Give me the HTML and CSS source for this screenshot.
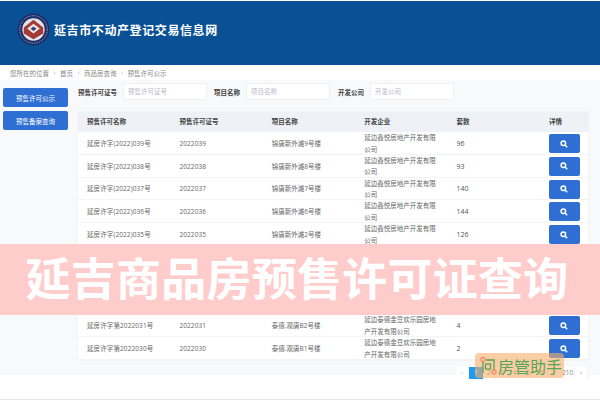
FILE: index.html
```html
<!DOCTYPE html>
<html lang="zh-CN">
<head>
    <meta charset="UTF-8">
    <title>延吉商品房预售许可证查询</title>
    <link rel="stylesheet" href="styles.css">
</head>
<body>
    <div class="header">
        <svg class="logo" viewBox="0 0 34 34">
            <circle cx="17" cy="17" r="16.5" fill="#1d2f6b"/>
            <circle cx="17" cy="17" r="14.2" fill="none" stroke="#dfe3ee" stroke-width="0.6" stroke-dasharray="1.5 1"/>
            <circle cx="17" cy="17" r="11.5" fill="#e4e2e4"/>
            <path d="M17 7 L27 15 L27 21 L17 27 L7 21 L7 15 Z" fill="#a33a38"/>
            <path d="M17 11 L23.5 16 L17 21 L10.5 16 Z" fill="#f1e6dc"/>
            <path d="M17 14 L20 16.2 L17 18.6 L14 16.2 Z" fill="#2c3f86"/>
        </svg>
        <h1>延吉市不动产登记交易信息网</h1>
    </div>

    <div class="crumb">
        <span>您所在的位置</span><i>›</i><span>首页</span><i>›</i><span>商品房查询</span><i>›</i><span>预售许可公示</span>
    </div>

    <div class="main">
        <div class="side">
            <a class="side-btn">预售许可公示</a>
            <a class="side-btn">预售备案查询</a>
        </div>
        <div class="content">
            <div class="filter">
                <label>预售许可证号</label>
                <input type="text" placeholder="预售许可证号">
                <label>项目名称</label>
                <input type="text" placeholder="项目名称">
                <label>开发公司</label>
                <input type="text" placeholder="开发公司">
            </div>
            <div class="table">
                <div class="row head">
                    <div>预售许可名称</div><div>预售许可证号</div><div>项目名称</div><div>开发企业</div><div>套数</div><div>详情</div>
                </div>
                <div class="row"><div class="lat">延房许字(2022)039号</div><div class="lat">2022039</div><div>锦唐新外滩9号楼</div><div>延边鑫悦房地产开发有限公司</div><div class="num">96</div><div><button class="detail"><svg viewBox="0 0 12 12"><circle cx="5" cy="5" r="3.4"/><path d="M7.5 7.5 L10.8 10.8"/></svg></button></div></div>
                <div class="row"><div class="lat">延房许字(2022)038号</div><div class="lat">2022038</div><div>锦唐新外滩8号楼</div><div>延边鑫悦房地产开发有限公司</div><div class="num">93</div><div><button class="detail"><svg viewBox="0 0 12 12"><circle cx="5" cy="5" r="3.4"/><path d="M7.5 7.5 L10.8 10.8"/></svg></button></div></div>
                <div class="row"><div class="lat">延房许字(2022)037号</div><div class="lat">2022037</div><div>锦唐新外滩7号楼</div><div>延边鑫悦房地产开发有限公司</div><div class="num">140</div><div><button class="detail"><svg viewBox="0 0 12 12"><circle cx="5" cy="5" r="3.4"/><path d="M7.5 7.5 L10.8 10.8"/></svg></button></div></div>
                <div class="row"><div class="lat">延房许字(2022)036号</div><div class="lat">2022036</div><div>锦唐新外滩6号楼</div><div>延边鑫悦房地产开发有限公司</div><div class="num">144</div><div><button class="detail"><svg viewBox="0 0 12 12"><circle cx="5" cy="5" r="3.4"/><path d="M7.5 7.5 L10.8 10.8"/></svg></button></div></div>
                <div class="row"><div class="lat">延房许字(2022)035号</div><div class="lat">2022035</div><div>锦唐新外滩2号楼</div><div>延边鑫悦房地产开发有限公司</div><div class="num">126</div><div><button class="detail"><svg viewBox="0 0 12 12"><circle cx="5" cy="5" r="3.4"/><path d="M7.5 7.5 L10.8 10.8"/></svg></button></div></div>
                <!-- rows under the banner -->
                <div class="row"></div>
                <div class="row"></div>
                <div class="row"></div>
                <div class="row"><div class="lat">延房许字第2022031号</div><div class="lat">2022031</div><div>泰德.观唐B2号楼</div><div>延边泰德金豆欢乐园房地产开发有限公司</div><div class="num">4</div><div><button class="detail"><svg viewBox="0 0 12 12"><circle cx="5" cy="5" r="3.4"/><path d="M7.5 7.5 L10.8 10.8"/></svg></button></div></div>
                <div class="row"><div class="lat">延房许字第2022030号</div><div class="lat">2022030</div><div>泰德.观唐B1号楼</div><div>延边泰德金豆欢乐园房地产开发有限公司</div><div class="num">2</div><div><button class="detail"><svg viewBox="0 0 12 12"><circle cx="5" cy="5" r="3.4"/><path d="M7.5 7.5 L10.8 10.8"/></svg></button></div></div>
            </div>
            <div class="pager">
                <span class="muted">‹</span><span class="current">1</span><span>2</span><span>3</span><span>4</span><span>5</span><span>6</span><span>···</span><span>210</span><span>›</span>
            </div>
        </div>
    </div>
    <div class="footer"></div>

    <div class="banner">延吉商品房预售许可证查询</div>
    <div class="mark">
        <svg viewBox="0 0 18 20">
            <path d="M4 3 L4 17 M7 4 L15 4 L15 17" fill="none" stroke="#5aa35a" stroke-width="1.3"/>
            <rect x="6.5" y="8" width="5" height="5" fill="none" stroke="#5aa35a" stroke-width="1.3"/>
            <circle cx="4" cy="3.5" r="2.2" fill="#f8c9a0" stroke="#ee7a55" stroke-width="1"/>
            <circle cx="15" cy="16" r="2.2" fill="#f8c9a0" stroke="#ee7a55" stroke-width="1"/>
        </svg>
        <span>房管助手</span>
    </div>
</body>
</html>
```

FILE: styles.css
```css
* {
    margin: 0;
    padding: 0;
    box-sizing: border-box;
}

html, body {
    width: 600px;
    height: 400px;
    overflow: hidden;
}

body {
    font-family: "Open Sans", "Noto Sans CJK SC", sans-serif;
    font-size: 6.5px;
    color: #666;
    background: white;
    display: flex;
    flex-direction: column;
}

.header {
    height: 64px;
    flex: none;
    margin-top: 1px;
    background: #0a5095;
    display: flex;
    align-items: center;
    padding: 0 0 7px 17px;
    gap: 4px;
}

.logo {
    width: 33px;
    height: 33px;
}

.header h1 {
    font-size: 12px;
    font-weight: 700;
    letter-spacing: 0.6px;
    color: white;
}

.crumb {
    height: 15px;
    flex: none;
    display: flex;
    align-items: center;
    padding-left: 10px;
    color: #888;
}

.crumb i {
    font-style: normal;
    color: #aaa;
    width: 11px;
    text-align: center;
}

.main {
    height: 295px;
    flex: none;
    background: #f8f9fa;
    display: flex;
}

.side {
    width: 78px;
    flex: none;
    padding: 8px 10px 0 3px;
    display: flex;
    flex-direction: column;
    gap: 4px;
}

.side-btn {
    height: 19px;
    background: #2f6fd3;
    color: white;
    border-radius: 2px;
    display: flex;
    align-items: center;
    justify-content: center;
}

.content {
    width: 510px;
    padding-top: 3px;
}

.filter {
    height: 17px;
    display: flex;
    align-items: center;
    margin-bottom: 12px;
}

.filter label {
    font-weight: 700;
    color: #444;
    margin-right: 6px;
}

.filter input {
    width: 84px;
    height: 17px;
    border: 1px solid #eef0f4;
    border-radius: 2px;
    background: white;
    padding-left: 4px;
    margin-right: 7px;
    font-family: inherit;
    font-size: 6.5px;
}

.filter input::placeholder {
    color: #b5bac4;
}

.filter label:nth-of-type(3) {
    margin-left: 1px;
}

.table {
    background: white;
    box-shadow: 0 0 2px rgba(0,0,0,0.06);
}

.row {
    display: grid;
    grid-template-columns: repeat(5, 92.4px) 1fr;
    height: 22.8px;
    align-items: center;
    border-bottom: 1px solid #f3f4f6;
    line-height: 11.5px;
}

.row > div {
    padding-left: 9px;
}

.row > div:nth-child(4) {
    padding-right: 10px;
}

.row .lat {
    letter-spacing: 0.1px;
}

.row .num {
    font-size: 7px;
    color: #555;
}

.head {
    height: 20px;
    background: #eef1f5;
    border-bottom: none;
    font-weight: 700;
    color: #444;
}

.detail {
    display: flex;
    align-items: center;
    justify-content: center;
    width: 31px;
    height: 19px;
    border: none;
    border-radius: 2px;
    background: #2f6fd3;
}

.detail svg {
    width: 8px;
    height: 8px;
    fill: none;
    stroke: white;
    stroke-width: 2.2;
}

.pager {
    display: flex;
    justify-content: flex-end;
    margin-top: 7px;
}

.pager span {
    flex: none;
    width: 13.2px;
    height: 12px;
    background: white;
    display: flex;
    align-items: center;
    justify-content: center;
    color: #888;
    border-right: 1px solid #f3f4f6;
}

.pager .muted {
    color: #ccc;
}

.pager .current {
    background: #1e9bf0;
    color: white;
    border: none;
}

.footer {
    flex: 1;
    border-bottom: 1px solid #e6e6e6;
}

.banner {
    position: absolute;
    left: 0;
    top: 244px;
    width: 600px;
    height: 71px;
    padding-right: 6px;
    background: #ffcccc;
    color: white;
    font-family: "Noto Sans CJK SC", sans-serif;
    font-size: 45px;
    font-weight: 700;
    letter-spacing: 0.25px;
    line-height: 66px;
    text-align: center;
}

.mark {
    position: absolute;
    left: 475px;
    top: 353px;
    width: 89px;
    height: 25px;
    border-radius: 4px;
    background: rgba(248, 175, 105, 0.6);
    display: flex;
    align-items: center;
    padding-left: 4px;
    gap: 1px;
    color: #5aa35a;
    font-family: "Noto Sans CJK SC", sans-serif;
    font-size: 16px;
}

.mark svg {
    width: 18px;
    height: 20px;
}
```
